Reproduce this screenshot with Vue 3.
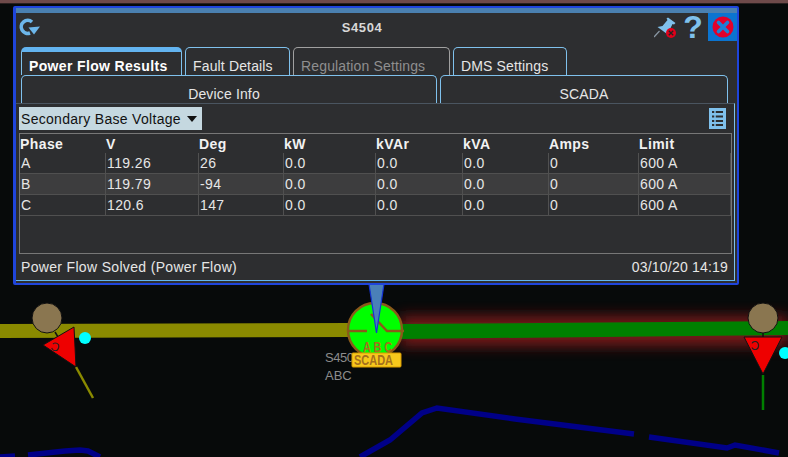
<template>
  <div class="screen">
    <!-- map behind the popup -->
    <svg class="map" width="788" height="457" viewBox="0 0 788 457">
      <defs>
        <filter id="glow" x="-10%" y="-150%" width="120%" height="400%">
          <feGaussianBlur stdDeviation="7" />
        </filter>
      </defs>
      <rect x="0" y="0" width="788" height="3" fill="#6e4a4a" />
      <rect x="0" y="3" width="788" height="1" fill="#2a2020" />

      <polyline class="bus" points="0,457 15,456" />
      <polyline class="bus" points="28,455 65,451 80,450 88,451 100,457" />
      <polyline class="bus" points="360,457 390,440 422,413 437,408 515,419 634,434" />
      <polyline class="bus" points="649,437 727,448 735,445 779,453" />

      <rect x="400" y="316" width="388" height="30" fill="#8a1a1a" opacity="0.85" filter="url(#glow)" />
      <path d="M0 324 L350 323 L350 337 L0 338 Z" fill="#8a8a00" />
      <path d="M400 324 L788 321 L788 335 L400 339 Z" fill="#008000" />

      <!-- left transformer -->
      <line x1="76" y1="367" x2="93" y2="398" stroke="#8a8a00" stroke-width="2.5" />
      <line x1="55" y1="332" x2="58" y2="337" stroke="#111" stroke-width="1.5" />
      <circle cx="47" cy="318" r="15" fill="#8a7650" stroke="#111" />
      <polygon points="74,327 43,345 76,367" fill="#ee0000" stroke="#111" />
      <text class="phase" text-anchor="middle" transform="translate(54 351) rotate(15) scale(-1 1)">C</text>
      <circle cx="85" cy="338" r="6" fill="#00ffff" />

      <!-- right transformer -->
      <line x1="763" y1="375" x2="763" y2="410" stroke="#008000" stroke-width="2.5" />
      <line x1="763" y1="331" x2="763" y2="337" stroke="#111" stroke-width="1.5" />
      <circle cx="763" cy="318" r="15" fill="#8a7650" stroke="#111" />
      <polygon points="744,337 782,337 763,374" fill="#ee0000" stroke="#111" />
      <text class="phase" text-anchor="middle" transform="translate(755 350) scale(-1 1)">C</text>
      <circle cx="785" cy="353" r="6" fill="#00ffff" />

      <!-- switch -->
      <text class="label" x="325" y="362" letter-spacing="-0.5">S450</text>
      <text class="label" x="325" y="380">ABC</text>
      <circle cx="375" cy="330" r="27" fill="#00ff00" stroke="#8a5a1a" stroke-width="2.5" />
      <polyline class="blade" points="349,331 367,331" />
      <polyline class="blade" points="371,314 387,331 404,331" />
      <text class="abc" x="363" y="352" textLength="29" lengthAdjust="spacingAndGlyphs">A B C</text>
      <rect x="352" y="353" width="49" height="14" rx="1" fill="#f7c81c" stroke="#d79a00" />
      <text class="badge" x="354" y="365" textLength="39" lengthAdjust="spacingAndGlyphs">SCADA</text>
      <polygon points="369,284 384,284 376.5,333" fill="#4a80b8" stroke="#1533d6" stroke-width="1.2" />
    </svg>

    <div class="popup">
      <div class="inner">
        <header class="head">
          <svg class="refresh" width="22" height="20" viewBox="0 0 22 20">
            <path d="M13 5 A6.5 6.5 0 1 0 11 16" fill="none" stroke="#6cb6ea" stroke-width="3.6" />
            <path d="M9.5 10.5 L21 9.5 L15 17.5 Z" fill="#6cb6ea" />
          </svg>
          <span class="title">S4504</span>
          <div class="tools">
            <svg class="pin" width="24" height="24" viewBox="0 0 24 24">
              <g transform="translate(-1.5 0)">
                <path d="M1.5 21 L7 15" stroke="#8a98a4" stroke-width="1.2" />
                <path d="M5 11 L10 10 L15 4 L14 2.5 L15.5 1.5 L23 7 L21.5 8.5 L20 8 L17 14 L16 19 Z" fill="#7fc1ec" />
                <circle cx="18.5" cy="17" r="5" fill="#e0001a" />
                <path d="M16.3 14.8 L20.7 19.2 M20.7 14.8 L16.3 19.2" stroke="#222" stroke-width="1.3" />
              </g>
            </svg>
            <span class="help">?</span>
            <div class="close">
              <svg width="22" height="22" viewBox="0 0 22 22">
                <circle cx="11" cy="11" r="10.5" fill="#e2002a" />
                <path d="M6.5 6.5 L15.5 15.5 M15.5 6.5 L6.5 15.5" stroke="#1d7fd6" stroke-width="3.6" stroke-linecap="round" />
              </svg>
            </div>
          </div>
        </header>

        <div class="tabs">
          <div
            v-for="t in tabs"
            :key="t.name"
            class="tab"
            :class="{ active: t.active, disabled: t.disabled }"
            :style="{ width: t.width + 'px' }"
          >
            {{ t.name }}
          </div>
        </div>
        <div class="tabs sub">
          <div class="tab center device">Device Info</div>
          <div class="tab center scada">SCADA</div>
        </div>

        <div class="panel">
          <div class="toolbar">
            <div class="select">
              Secondary Base Voltage
              <span class="arrow"></span>
            </div>
            <svg class="list" width="17" height="21" viewBox="0 0 17 21">
              <rect width="17" height="21" fill="#7fc1ec" />
              <path d="M3 4 H14 M3 8.5 H14 M3 13 H14 M3 17 H14" stroke="#2d2e30" stroke-width="2" />
              <path d="M6 3 V18" stroke="#7fc1ec" stroke-width="1.5" />
            </svg>
          </div>

          <div class="grid">
            <div class="row header">
              <div v-for="c in columns" :key="c" class="cell">{{ c }}</div>
            </div>
            <div v-for="(r, i) in rows" :key="r[0]" class="row" :class="{ odd: i === 1 }">
              <div v-for="(v, j) in r" :key="j" class="cell">{{ v }}</div>
            </div>
          </div>

          <div class="status">
            <span>Power Flow Solved (Power Flow)</span>
            <span class="stamp">03/10/20 14:19</span>
          </div>
        </div>
      </div>
    </div>
  </div>
</template>

<script setup>
const tabs = [
  { name: "Power Flow Results", width: 161, active: true },
  { name: "Fault Details", width: 105 },
  { name: "Regulation Settings", width: 157, disabled: true },
  { name: "DMS Settings", width: 114 }
];

const columns = ["Phase", "V", "Deg", "kW", "kVAr", "kVA", "Amps", "Limit"];

const rows = [
  ["A", "119.26", "26", "0.0", "0.0", "0.0", "0", "600 A"],
  ["B", "119.79", "-94", "0.0", "0.0", "0.0", "0", "600 A"],
  ["C", "120.6", "147", "0.0", "0.0", "0.0", "0", "600 A"]
];
</script>

<style>
html,
body {
  margin: 0;
  background: #070a0a;
}
</style>

<style scoped>
.screen {
  position: relative;
  width: 788px;
  height: 457px;
  overflow: hidden;
  background: #070a0a;
  font-family: "Liberation Sans", Arial, sans-serif;
  font-size: 14px;
  color: #e6e6e6;
}

.map {
  position: absolute;
  left: 0;
  top: 0;
}

.bus {
  fill: none;
  stroke: #000088;
  stroke-width: 5.5;
}

.blade {
  fill: none;
  stroke: #8a5a1a;
  stroke-width: 2.5;
}

.phase {
  font-size: 12px;
  fill: #222;
}

.label {
  font-size: 13px;
  fill: #8c8c8c;
}

.abc {
  font-size: 14px;
  font-weight: bold;
  fill: #a5701c;
}

.badge {
  font-size: 14px;
  font-weight: bold;
  fill: #a5701c;
}

.popup {
  position: absolute;
  left: 13px;
  top: 6px;
  width: 726px;
  height: 279px;
  box-sizing: border-box;
  border: 2px solid #1f45dc;
  border-left-width: 3px;
  border-radius: 2px;
  background: #4a80b0;
  padding-top: 5px;
}

.inner {
  height: 270px;
  box-sizing: border-box;
  background: #2d2e30;
  padding-left: 5px;
}

.head {
  position: relative;
  display: flex;
  align-items: flex-start;
  justify-content: space-between;
  height: 34px;
}

.refresh {
  margin: 4px 0 0 -2px;
}

.title {
  position: absolute;
  left: 0;
  right: 34px;
  top: 7px;
  text-align: center;
  font-size: 13px;
  font-weight: bold;
  color: #d8d8d8;
  letter-spacing: 0.6px;
}

.tools {
  display: flex;
  align-items: flex-start;
}

.pin {
  margin-top: 3px;
}

.help {
  width: 30px;
  text-align: center;
  font-size: 32px;
  font-weight: bold;
  line-height: 28px;
  color: #7fc1ec;
}

.close {
  display: flex;
  align-items: center;
  justify-content: center;
  width: 29px;
  height: 28px;
  background: #0b74d0;
}

.tabs {
  display: flex;
  gap: 3px;
  height: 28px;
}

.tab {
  box-sizing: border-box;
  height: 28px;
  padding: 9px 0 0 7px;
  line-height: 18px;
  border: 1px solid #7fc1ec;
  border-bottom: none;
  border-radius: 5px 5px 0 0;
  letter-spacing: 0.15px;
  white-space: nowrap;
}

.tab.active {
  border-top: 5px solid #63b4f0;
  padding-top: 5px;
  font-weight: bold;
  color: #fff;
  letter-spacing: 0.35px;
}

.tab.disabled {
  border-color: #a0a0a0;
  color: #8f8f8f;
}

.tab.center {
  text-align: center;
  padding-left: 0;
}

.device {
  width: 416px;
  padding-right: 10px;
}

.scada {
  width: 288px;
}

.panel {
  margin-left: -5px;
  width: 719px;
  height: 178px;
  box-sizing: border-box;
  border-top: 1px solid #4a5560;
  border-right: 1px solid #7fc1ec;
  border-bottom: 1px solid #63b4f0;
  padding: 3px 2px 0 3px;
}

.toolbar {
  display: flex;
  align-items: flex-start;
  justify-content: space-between;
  height: 26px;
}

.select {
  display: flex;
  align-items: center;
  gap: 6px;
  width: 183px;
  height: 23px;
  box-sizing: border-box;
  padding-left: 2px;
  background: #c5d8e0;
  color: #111;
  letter-spacing: 0.3px;
  white-space: nowrap;
}

.arrow {
  width: 0;
  height: 0;
  border-left: 5px solid transparent;
  border-right: 5px solid transparent;
  border-top: 6px solid #111;
}

.list {
  margin: 1px 6px 0 0;
}

.grid {
  box-sizing: border-box;
  width: 713px;
  height: 121px;
  border: 1px solid #777;
}

.row {
  display: grid;
  grid-template-columns: 86px 93px 85px 92px 87px 86px 90px 92px;
  height: 21px;
  box-sizing: border-box;
  border-bottom: 1px solid #505050;
}

.row.header {
  height: 19px;
  border-bottom: none;
  font-weight: bold;
  color: #f2f2f2;
}

.row.odd {
  background: #3d3d3e;
}

.cell {
  box-sizing: border-box;
  padding-left: 1px;
  line-height: 20px;
  border-right: 1px solid #505050;
  letter-spacing: 0.4px;
}

.header .cell {
  border-right: none;
  line-height: 21px;
  padding-left: 0;
}

.status {
  display: flex;
  justify-content: space-between;
  padding: 4px 4px 0 2px;
  line-height: 18px;
  letter-spacing: 0.33px;
}

.stamp {
  letter-spacing: 0.2px;
}
</style>
